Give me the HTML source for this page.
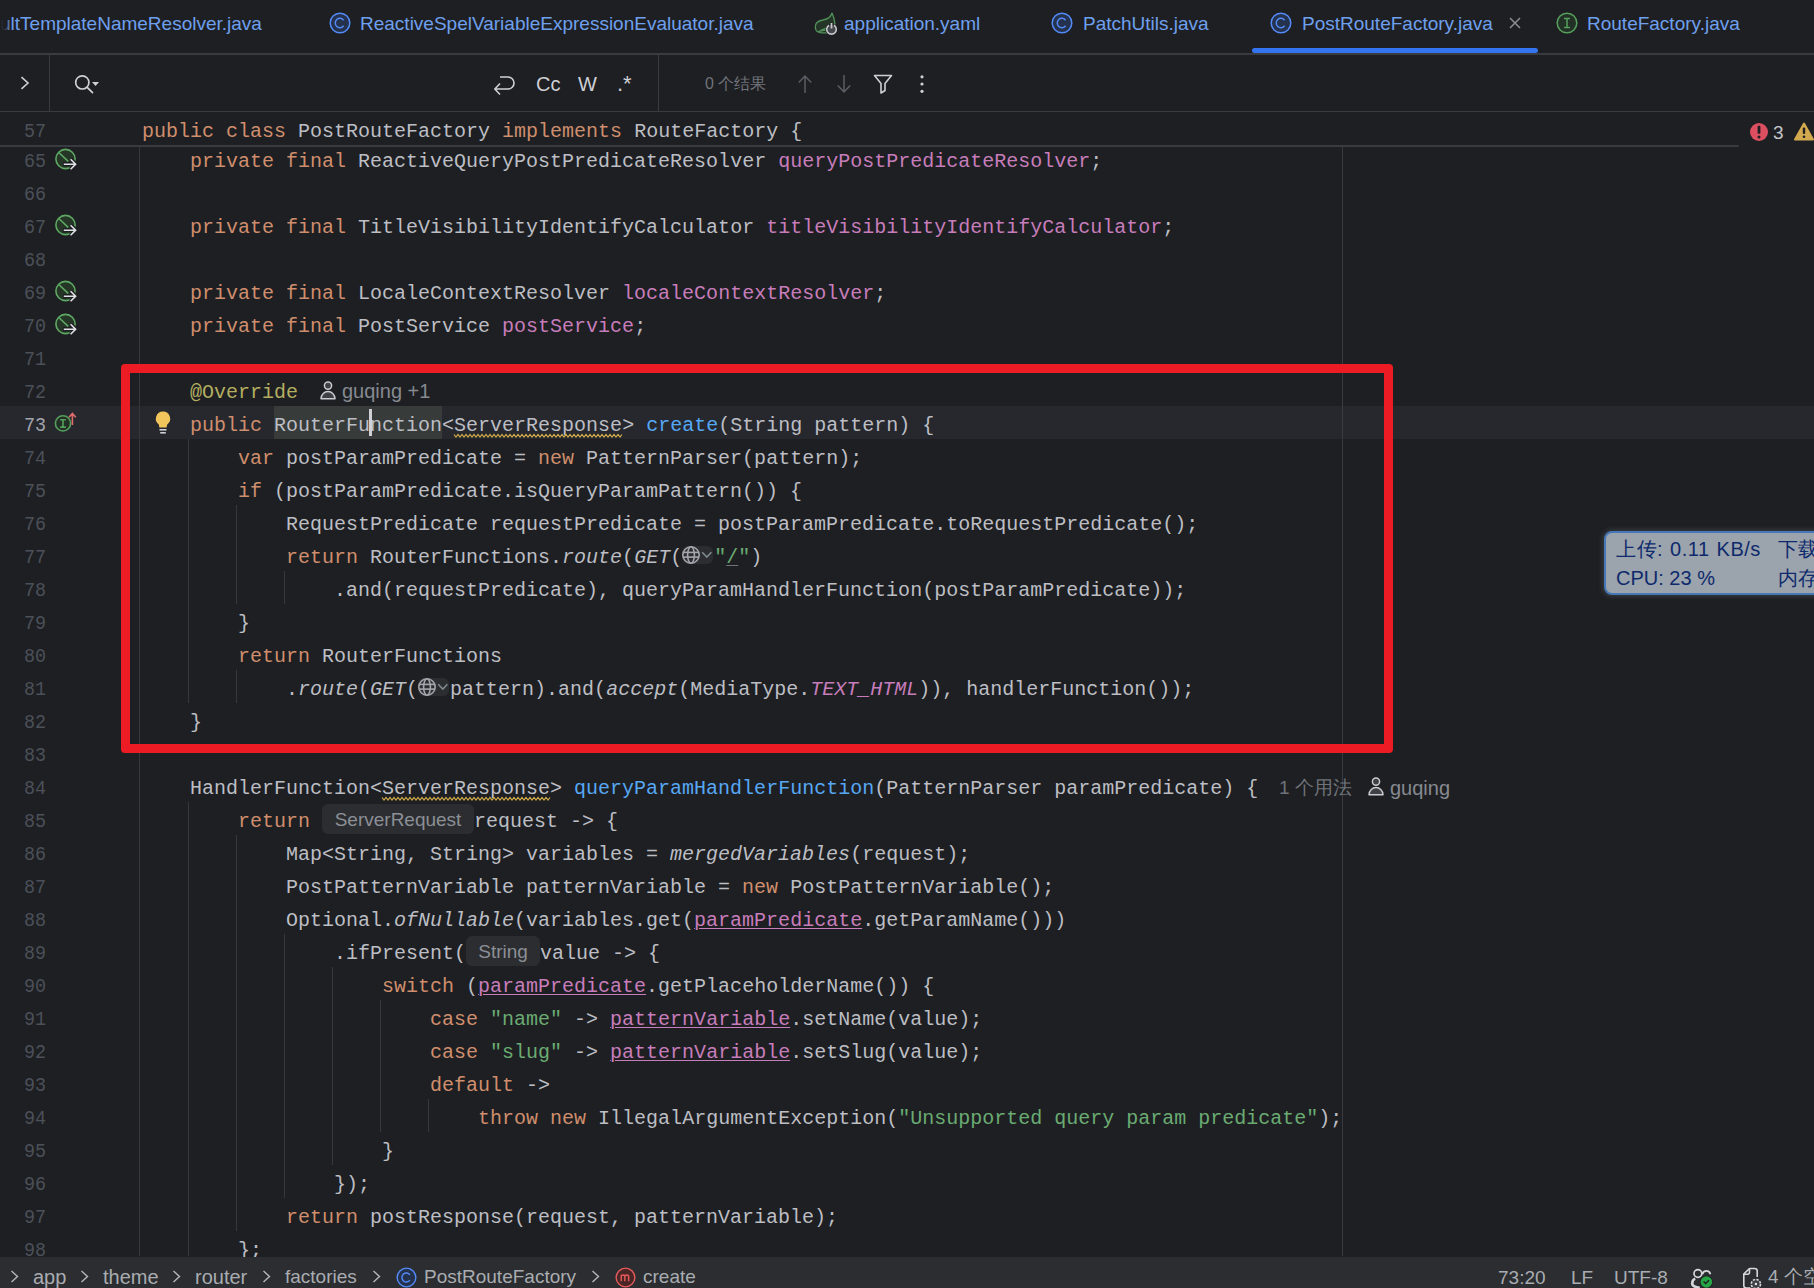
<!DOCTYPE html>
<html><head><meta charset="utf-8">
<style>
html,body{margin:0;padding:0;}
body{width:1814px;height:1288px;overflow:hidden;position:relative;background:#1E1F22;font-family:"Liberation Sans",sans-serif;}
.abs{position:absolute;}
svg{position:absolute;overflow:visible;}
/* tabs */
.tab{position:absolute;top:0px;height:47px;line-height:47px;font-size:19px;color:#6EA0EE;white-space:nowrap;}
.sep{position:absolute;background:#393B40;}
.ui{position:absolute;white-space:nowrap;font-size:19px;line-height:24px;}
/* editor */
.ln{position:absolute;left:0;width:46px;text-align:right;transform:scaleX(0.92);transform-origin:46px 0;height:33px;line-height:33px;padding-top:3px;font-family:"Liberation Mono",monospace;font-size:20px;color:#4B5059;}
.ln.cur{color:#A1A3AB;}
.cl{position:absolute;left:142px;height:33px;line-height:33px;padding-top:3px;font-family:"Liberation Mono",monospace;font-size:20px;color:#BCBEC4;white-space:pre;}
.k{color:#CF8E6D;}
.f{color:#C77DBB;}
.m{color:#56A8F5;}
.s{color:#6AAB73;}
.a{color:#B3AE60;}
.i{font-style:italic;}
.sf{color:#C77DBB;font-style:italic;}
.pu{color:#C77DBB;text-decoration:underline;text-decoration-color:#C77DBB;text-underline-offset:2px;text-decoration-thickness:1px;}
.u{text-decoration:underline;text-decoration-color:#6F737A;text-underline-offset:2px;text-decoration-thickness:1px;}
.w{}
.hl{}
.inlayg{display:inline-block;position:relative;width:32px;height:33px;vertical-align:top;}
.gbg{position:absolute;left:0;top:5px;width:31px;height:18px;border-radius:6px;background:#2B2D30;}
.inlayt,.inlayt2{display:inline-block;position:relative;top:-1px;font-family:"Liberation Sans",sans-serif;font-size:19px;color:#8C8F96;background:#2B2D30;border-radius:6px;height:30px;line-height:31px;vertical-align:top;text-align:center;}
.inlayt{width:152px;}
.inlayt2{width:74px;}
.guide{position:absolute;width:1px;background:#35373B;}
</style></head><body>

<!-- ============ TAB BAR ============ -->
<div class="tab" style="left:0px;">ultTemplateNameResolver.java</div>
<div class="abs" style="left:0;top:0;width:9px;height:50px;background:linear-gradient(90deg,#1E1F22 0%,rgba(30,31,34,0.85) 50%,rgba(30,31,34,0.3) 100%);"></div>
<svg style="left:329px;top:12px" width="22" height="22" viewBox="0 0 22 22"><circle cx="11" cy="11" r="9.8" fill="#25324D" stroke="#548AF7" stroke-width="1.5"/><path d="M14.6 8.2 A4.6 4.8 0 1 0 14.6 13.8" fill="none" stroke="#548AF7" stroke-width="1.5"/></svg>
<div class="tab" style="left:360px;">ReactiveSpelVariableExpressionEvaluator.java</div>
<svg style="left:814px;top:12px" width="24" height="24" viewBox="0 0 24 24"><path d="M18 1 C17 5 14 7 9 8 C3 9 1 12 1.3 15.5 C1.6 19 4 20.8 8 20.8 L14 20.8 L14 17.5 C10 18.5 6 19 5 19.5 C8 17 12 16.5 16 15 L21 12 C20.5 8 19.5 4 18 1 Z" fill="#243427" stroke="#52905A" stroke-width="1.3" stroke-linejoin="round"/><circle cx="17.5" cy="17.5" r="6" fill="#1E1F22"/><circle cx="17.5" cy="17.5" r="4.6" fill="#45474C"/><path d="M15 13.2 A4.8 4.8 0 1 0 20 13.2" fill="none" stroke="#C4C6CB" stroke-width="1.6"/><line x1="17.5" y1="11" x2="17.5" y2="16.5" stroke="#C4C6CB" stroke-width="1.8"/></svg>
<div class="tab" style="left:844px;">application.yaml</div>
<svg style="left:1051px;top:12px" width="22" height="22" viewBox="0 0 22 22"><circle cx="11" cy="11" r="9.8" fill="#25324D" stroke="#548AF7" stroke-width="1.5"/><path d="M14.6 8.2 A4.6 4.8 0 1 0 14.6 13.8" fill="none" stroke="#548AF7" stroke-width="1.5"/></svg>
<div class="tab" style="left:1083px;">PatchUtils.java</div>
<svg style="left:1270px;top:12px" width="22" height="22" viewBox="0 0 22 22"><circle cx="11" cy="11" r="9.8" fill="#25324D" stroke="#548AF7" stroke-width="1.5"/><path d="M14.6 8.2 A4.6 4.8 0 1 0 14.6 13.8" fill="none" stroke="#548AF7" stroke-width="1.5"/></svg>
<div class="tab" style="left:1302px;">PostRouteFactory.java</div>
<svg style="left:1509px;top:17px" width="12" height="12" viewBox="0 0 12 12"><path d="M1 1 L11 11 M11 1 L1 11" stroke="#8C8E93" stroke-width="1.5"/></svg>
<svg style="left:1556px;top:12px" width="22" height="22" viewBox="0 0 22 22"><circle cx="11" cy="11" r="9.8" fill="#233026" stroke="#55A05C" stroke-width="1.5"/><path d="M8 6.5 H14 M11 6.5 V15.5 M8 15.5 H14" stroke="#55A05C" stroke-width="1.5"/></svg>
<div class="tab" style="left:1587px;">RouteFactory.java</div>
<div class="sep" style="left:0;top:53px;width:1814px;height:2px;"></div>
<div class="abs" style="left:1252px;top:48px;width:286px;height:5px;border-radius:3px;background:#3574F0;"></div>

<!-- ============ SEARCH BAR ============ -->
<svg style="left:20px;top:76px" width="10" height="14" viewBox="0 0 10 14"><path d="M1.5 1.2 L8 7 L1.5 12.8" fill="none" stroke="#CED0D6" stroke-width="1.6"/></svg>
<div class="sep" style="left:49px;top:54px;width:1px;height:57px;"></div>
<svg style="left:72px;top:72px" width="30" height="24" viewBox="0 0 30 24"><circle cx="10.3" cy="10.4" r="6.6" fill="none" stroke="#CED0D6" stroke-width="1.7"/><line x1="15.2" y1="15.4" x2="20.5" y2="20.7" stroke="#CED0D6" stroke-width="1.7" stroke-linecap="round"/><path d="M20 10 L27 10 L23.5 14 Z" fill="#CED0D6"/></svg>
<svg style="left:492px;top:73px" width="24" height="24" viewBox="0 0 24 24"><path d="M8 4 H16 A6 6 0 0 1 16 16 H3.5 M8 10.5 L2.8 16 L8 21.5" fill="none" stroke="#CED0D6" stroke-width="1.6" stroke-linejoin="round"/></svg>
<div class="ui" style="left:536px;top:72px;font-size:20px;color:#CED0D6;">Cc</div>
<div class="ui" style="left:578px;top:72px;font-size:20px;color:#CED0D6;">W</div>
<div class="ui" style="left:617px;top:72px;font-size:22px;color:#CED0D6;">.*</div>
<div class="sep" style="left:658px;top:54px;width:1px;height:57px;"></div>
<div class="ui" style="left:705px;top:72px;font-size:16px;color:#6F737A;">0 个结果</div>
<svg style="left:797px;top:74px" width="16" height="20" viewBox="0 0 16 20"><path d="M8 2 V19 M1.8 8.5 L8 2 L14.2 8.5" fill="none" stroke="#5B5E64" stroke-width="1.5"/></svg>
<svg style="left:836px;top:74px" width="16" height="20" viewBox="0 0 16 20"><path d="M8 1 V18 M1.8 11.5 L8 18 L14.2 11.5" fill="none" stroke="#5B5E64" stroke-width="1.5"/></svg>
<svg style="left:873px;top:74px" width="20" height="21" viewBox="0 0 20 21"><path d="M1.5 1.5 H18.5 L12 9.5 V16.5 L8 19 V9.5 Z" fill="none" stroke="#CED0D6" stroke-width="1.6" stroke-linejoin="round"/></svg>
<svg style="left:918px;top:74px" width="8" height="20" viewBox="0 0 8 20"><circle cx="4" cy="2.8" r="1.6" fill="#CED0D6"/><circle cx="4" cy="10" r="1.6" fill="#CED0D6"/><circle cx="4" cy="17.3" r="1.6" fill="#CED0D6"/></svg>
<div class="sep" style="left:0;top:111px;width:1814px;height:1px;"></div>

<!-- ============ EDITOR ============ -->
<div class="abs" style="left:0;top:406px;width:1814px;height:33px;background:#26282E;"></div>
<div class="abs" style="left:274px;top:406px;width:168px;height:33px;background:#373B39;"></div>
<div class="guide" style="left:139px;top:147px;height:1109px;"></div>
<div class="guide" style="left:1342px;top:147px;height:1109px;background:#393B40;"></div>
<div class="guide" style="left:188px;top:439px;height:264px"></div>
<div class="guide" style="left:236px;top:505px;height:99px"></div>
<div class="guide" style="left:284px;top:571px;height:33px"></div>
<div class="guide" style="left:236px;top:670px;height:33px"></div>
<div class="guide" style="left:188px;top:802px;height:454px"></div>
<div class="guide" style="left:236px;top:835px;height:396px"></div>
<div class="guide" style="left:284px;top:934px;height:264px"></div>
<div class="guide" style="left:332px;top:967px;height:198px"></div>
<div class="guide" style="left:380px;top:1000px;height:132px"></div>
<div class="guide" style="left:428px;top:1099px;height:33px"></div>
<div class="ln" style="top:142px">65</div>
<div class="ln" style="top:175px">66</div>
<div class="ln" style="top:208px">67</div>
<div class="ln" style="top:241px">68</div>
<div class="ln" style="top:274px">69</div>
<div class="ln" style="top:307px">70</div>
<div class="ln" style="top:340px">71</div>
<div class="ln" style="top:373px">72</div>
<div class="ln cur" style="top:406px">73</div>
<div class="ln" style="top:439px">74</div>
<div class="ln" style="top:472px">75</div>
<div class="ln" style="top:505px">76</div>
<div class="ln" style="top:538px">77</div>
<div class="ln" style="top:571px">78</div>
<div class="ln" style="top:604px">79</div>
<div class="ln" style="top:637px">80</div>
<div class="ln" style="top:670px">81</div>
<div class="ln" style="top:703px">82</div>
<div class="ln" style="top:736px">83</div>
<div class="ln" style="top:769px">84</div>
<div class="ln" style="top:802px">85</div>
<div class="ln" style="top:835px">86</div>
<div class="ln" style="top:868px">87</div>
<div class="ln" style="top:901px">88</div>
<div class="ln" style="top:934px">89</div>
<div class="ln" style="top:967px">90</div>
<div class="ln" style="top:1000px">91</div>
<div class="ln" style="top:1033px">92</div>
<div class="ln" style="top:1066px">93</div>
<div class="ln" style="top:1099px">94</div>
<div class="ln" style="top:1132px">95</div>
<div class="ln" style="top:1165px">96</div>
<div class="ln" style="top:1198px">97</div>
<div class="ln" style="top:1231px">98</div>
<div class="cl" style="top:142px">    <span class="k">private</span> <span class="k">final</span> ReactiveQueryPostPredicateResolver <span class="f">queryPostPredicateResolver</span>;</div>
<div class="cl" style="top:175px"></div>
<div class="cl" style="top:208px">    <span class="k">private</span> <span class="k">final</span> TitleVisibilityIdentifyCalculator <span class="f">titleVisibilityIdentifyCalculator</span>;</div>
<div class="cl" style="top:241px"></div>
<div class="cl" style="top:274px">    <span class="k">private</span> <span class="k">final</span> LocaleContextResolver <span class="f">localeContextResolver</span>;</div>
<div class="cl" style="top:307px">    <span class="k">private</span> <span class="k">final</span> PostService <span class="f">postService</span>;</div>
<div class="cl" style="top:340px"></div>
<div class="cl" style="top:373px">    <span class="a">@Override</span></div>
<div class="cl" style="top:406px">    <span class="k">public</span> <span class="hl">RouterFunction</span>&lt;<span class="w">ServerResponse</span>&gt; <span class="m">create</span>(String pattern) {</div>
<div class="cl" style="top:439px">        <span class="k">var</span> postParamPredicate = <span class="k">new</span> PatternParser(pattern);</div>
<div class="cl" style="top:472px">        <span class="k">if</span> (postParamPredicate.isQueryParamPattern()) {</div>
<div class="cl" style="top:505px">            RequestPredicate requestPredicate = postParamPredicate.toRequestPredicate();</div>
<div class="cl" style="top:538px">            <span class="k">return</span> RouterFunctions.<span class="i">route</span>(<span class="i">GET</span>(<span class="inlayg"><span class="gbg"></span><svg style="left:0px;top:4px" width="20" height="20" viewBox="0 0 20 20"><g fill="none" stroke="#A3A6AD" stroke-width="1.6"><circle cx="9" cy="10" r="8.2"/><ellipse cx="9" cy="10" rx="3.4" ry="8.2"/><line x1="1" y1="7.4" x2="17" y2="7.4"/><line x1="1" y1="12.1" x2="17" y2="12.1"/></g></svg><svg style="left:19px;top:10px" width="12" height="8" viewBox="0 0 12 8"><path d="M1.2 1.2 L5.8 6 L10.4 1.2" fill="none" stroke="#7E898E" stroke-width="1.6"/></svg></span><span class="s">"</span><span class="s u">/</span><span class="s">"</span>)</div>
<div class="cl" style="top:571px">                .and(requestPredicate), queryParamHandlerFunction(postParamPredicate));</div>
<div class="cl" style="top:604px">        }</div>
<div class="cl" style="top:637px">        <span class="k">return</span> RouterFunctions</div>
<div class="cl" style="top:670px">            .<span class="i">route</span>(<span class="i">GET</span>(<span class="inlayg"><span class="gbg"></span><svg style="left:0px;top:4px" width="20" height="20" viewBox="0 0 20 20"><g fill="none" stroke="#A3A6AD" stroke-width="1.6"><circle cx="9" cy="10" r="8.2"/><ellipse cx="9" cy="10" rx="3.4" ry="8.2"/><line x1="1" y1="7.4" x2="17" y2="7.4"/><line x1="1" y1="12.1" x2="17" y2="12.1"/></g></svg><svg style="left:19px;top:10px" width="12" height="8" viewBox="0 0 12 8"><path d="M1.2 1.2 L5.8 6 L10.4 1.2" fill="none" stroke="#7E898E" stroke-width="1.6"/></svg></span>pattern).and(<span class="i">accept</span>(MediaType.<span class="sf">TEXT_HTML</span>)), handlerFunction());</div>
<div class="cl" style="top:703px">    }</div>
<div class="cl" style="top:736px"></div>
<div class="cl" style="top:769px">    HandlerFunction&lt;<span class="w">ServerResponse</span>&gt; <span class="m">queryParamHandlerFunction</span>(PatternParser paramPredicate) {</div>
<div class="cl" style="top:802px">        <span class="k">return</span> <span class="inlayt">ServerRequest</span>request -&gt; {</div>
<div class="cl" style="top:835px">            Map&lt;String, String&gt; variables = <span class="i">mergedVariables</span>(request);</div>
<div class="cl" style="top:868px">            PostPatternVariable patternVariable = <span class="k">new</span> PostPatternVariable();</div>
<div class="cl" style="top:901px">            Optional.<span class="i">ofNullable</span>(variables.get(<span class="pu">paramPredicate</span>.getParamName()))</div>
<div class="cl" style="top:934px">                .ifPresent(<span class="inlayt2">String</span>value -&gt; {</div>
<div class="cl" style="top:967px">                    <span class="k">switch</span> (<span class="pu">paramPredicate</span>.getPlaceholderName()) {</div>
<div class="cl" style="top:1000px">                        <span class="k">case</span> <span class="s">"name"</span> -&gt; <span class="pu">patternVariable</span>.setName(value);</div>
<div class="cl" style="top:1033px">                        <span class="k">case</span> <span class="s">"slug"</span> -&gt; <span class="pu">patternVariable</span>.setSlug(value);</div>
<div class="cl" style="top:1066px">                        <span class="k">default</span> -&gt;</div>
<div class="cl" style="top:1099px">                            <span class="k">throw</span> <span class="k">new</span> IllegalArgumentException(<span class="s">"Unsupported query param predicate"</span>);</div>
<div class="cl" style="top:1132px">                    }</div>
<div class="cl" style="top:1165px">                });</div>
<div class="cl" style="top:1198px">            <span class="k">return</span> postResponse(request, patternVariable);</div>
<div class="cl" style="top:1231px">        };</div>

<!-- wavy -->
<svg style="left:454px;top:434px" width="168" height="4" viewBox="0 0 168 4"><polyline points="0.0,0.5 2.0,3.0 4.0,0.5 6.0,3.0 8.0,0.5 10.0,3.0 12.0,0.5 14.0,3.0 16.0,0.5 18.0,3.0 20.0,0.5 22.0,3.0 24.0,0.5 26.0,3.0 28.0,0.5 30.0,3.0 32.0,0.5 34.0,3.0 36.0,0.5 38.0,3.0 40.0,0.5 42.0,3.0 44.0,0.5 46.0,3.0 48.0,0.5 50.0,3.0 52.0,0.5 54.0,3.0 56.0,0.5 58.0,3.0 60.0,0.5 62.0,3.0 64.0,0.5 66.0,3.0 68.0,0.5 70.0,3.0 72.0,0.5 74.0,3.0 76.0,0.5 78.0,3.0 80.0,0.5 82.0,3.0 84.0,0.5 86.0,3.0 88.0,0.5 90.0,3.0 92.0,0.5 94.0,3.0 96.0,0.5 98.0,3.0 100.0,0.5 102.0,3.0 104.0,0.5 106.0,3.0 108.0,0.5 110.0,3.0 112.0,0.5 114.0,3.0 116.0,0.5 118.0,3.0 120.0,0.5 122.0,3.0 124.0,0.5 126.0,3.0 128.0,0.5 130.0,3.0 132.0,0.5 134.0,3.0 136.0,0.5 138.0,3.0 140.0,0.5 142.0,3.0 144.0,0.5 146.0,3.0 148.0,0.5 150.0,3.0 152.0,0.5 154.0,3.0 156.0,0.5 158.0,3.0 160.0,0.5 162.0,3.0 164.0,0.5 166.0,3.0 168.0,0.5" fill="none" stroke="#D6AE4A" stroke-width="1.2"/></svg>
<svg style="left:382px;top:797px" width="168" height="4" viewBox="0 0 168 4"><polyline points="0.0,0.5 2.0,3.0 4.0,0.5 6.0,3.0 8.0,0.5 10.0,3.0 12.0,0.5 14.0,3.0 16.0,0.5 18.0,3.0 20.0,0.5 22.0,3.0 24.0,0.5 26.0,3.0 28.0,0.5 30.0,3.0 32.0,0.5 34.0,3.0 36.0,0.5 38.0,3.0 40.0,0.5 42.0,3.0 44.0,0.5 46.0,3.0 48.0,0.5 50.0,3.0 52.0,0.5 54.0,3.0 56.0,0.5 58.0,3.0 60.0,0.5 62.0,3.0 64.0,0.5 66.0,3.0 68.0,0.5 70.0,3.0 72.0,0.5 74.0,3.0 76.0,0.5 78.0,3.0 80.0,0.5 82.0,3.0 84.0,0.5 86.0,3.0 88.0,0.5 90.0,3.0 92.0,0.5 94.0,3.0 96.0,0.5 98.0,3.0 100.0,0.5 102.0,3.0 104.0,0.5 106.0,3.0 108.0,0.5 110.0,3.0 112.0,0.5 114.0,3.0 116.0,0.5 118.0,3.0 120.0,0.5 122.0,3.0 124.0,0.5 126.0,3.0 128.0,0.5 130.0,3.0 132.0,0.5 134.0,3.0 136.0,0.5 138.0,3.0 140.0,0.5 142.0,3.0 144.0,0.5 146.0,3.0 148.0,0.5 150.0,3.0 152.0,0.5 154.0,3.0 156.0,0.5 158.0,3.0 160.0,0.5 162.0,3.0 164.0,0.5 166.0,3.0 168.0,0.5" fill="none" stroke="#D6AE4A" stroke-width="1.2"/></svg>
<!-- gutter icons -->
<svg style="left:54px;top:148px" width="24" height="24" viewBox="0 0 24 24"><circle cx="11.5" cy="11" r="9.6" fill="#253627" stroke="#5EA863" stroke-width="1.6"/><line x1="4.8" y1="4.5" x2="14.2" y2="13.4" stroke="#5EA863" stroke-width="1.6"/><path d="M9 16.2 H21.8 M16.6 11.2 L21.8 16.2 L16.6 21.2" fill="none" stroke="#1E1F22" stroke-width="4.2"/><path d="M9.8 16.2 H21.6 M16.6 11.2 L21.6 16.2 L16.6 21.2" fill="none" stroke="#DFE1E5" stroke-width="1.6"/></svg>
<svg style="left:54px;top:214px" width="24" height="24" viewBox="0 0 24 24"><circle cx="11.5" cy="11" r="9.6" fill="#253627" stroke="#5EA863" stroke-width="1.6"/><line x1="4.8" y1="4.5" x2="14.2" y2="13.4" stroke="#5EA863" stroke-width="1.6"/><path d="M9 16.2 H21.8 M16.6 11.2 L21.8 16.2 L16.6 21.2" fill="none" stroke="#1E1F22" stroke-width="4.2"/><path d="M9.8 16.2 H21.6 M16.6 11.2 L21.6 16.2 L16.6 21.2" fill="none" stroke="#DFE1E5" stroke-width="1.6"/></svg>
<svg style="left:54px;top:280px" width="24" height="24" viewBox="0 0 24 24"><circle cx="11.5" cy="11" r="9.6" fill="#253627" stroke="#5EA863" stroke-width="1.6"/><line x1="4.8" y1="4.5" x2="14.2" y2="13.4" stroke="#5EA863" stroke-width="1.6"/><path d="M9 16.2 H21.8 M16.6 11.2 L21.8 16.2 L16.6 21.2" fill="none" stroke="#1E1F22" stroke-width="4.2"/><path d="M9.8 16.2 H21.6 M16.6 11.2 L21.6 16.2 L16.6 21.2" fill="none" stroke="#DFE1E5" stroke-width="1.6"/></svg>
<svg style="left:54px;top:313px" width="24" height="24" viewBox="0 0 24 24"><circle cx="11.5" cy="11" r="9.6" fill="#253627" stroke="#5EA863" stroke-width="1.6"/><line x1="4.8" y1="4.5" x2="14.2" y2="13.4" stroke="#5EA863" stroke-width="1.6"/><path d="M9 16.2 H21.8 M16.6 11.2 L21.8 16.2 L16.6 21.2" fill="none" stroke="#1E1F22" stroke-width="4.2"/><path d="M9.8 16.2 H21.6 M16.6 11.2 L21.6 16.2 L16.6 21.2" fill="none" stroke="#DFE1E5" stroke-width="1.6"/></svg>
<svg style="left:54px;top:411px" width="24" height="22" viewBox="0 0 24 22"><circle cx="9" cy="12.4" r="7.6" fill="#233026" stroke="#55A05C" stroke-width="1.6"/><path d="M6.2 8.7 H11.8 M9 8.7 V16.1 M6.2 16.1 H11.8" stroke="#55A05C" stroke-width="1.6"/><path d="M18.4 14 V2.5 M15 6.2 L18.4 2.5 L21.8 6.2" fill="none" stroke="#E06C6C" stroke-width="1.6"/></svg>
<!-- lightbulb -->
<svg style="left:154px;top:410px" width="18" height="26" viewBox="0 0 18 26"><path d="M9 1.5 A7.2 7.2 0 0 1 13.2 14.5 L12.6 17.5 H5.4 L4.8 14.5 A7.2 7.2 0 0 1 9 1.5 Z" fill="#F2C55C"/><rect x="5.5" y="19" width="7" height="1.6" fill="#CED0D6"/><rect x="6.2" y="22" width="5.6" height="1.6" fill="#CED0D6"/></svg>
<!-- caret -->
<div class="abs" style="left:369px;top:409px;width:3px;height:27px;background:#CED0D6;"></div>
<!-- inlay author line 72 -->
<svg style="left:320px;top:381px" width="17" height="19" viewBox="0 0 17 19"><circle cx="8" cy="4.6" r="3.6" fill="#3E4046" stroke="#C9CBD0" stroke-width="1.5"/><path d="M1 17.8 A7 7.2 0 0 1 15 17.8 Z" fill="#3E4046" stroke="#C9CBD0" stroke-width="1.5" stroke-linejoin="round"/></svg>
<div class="ui" style="left:342px;top:379px;font-size:20px;color:#868A91;">guqing +1</div>
<!-- inlay line 84 -->
<div class="ui" style="left:1279px;top:776px;font-size:19px;color:#6F737A;">1 个用法</div>
<svg style="left:1368px;top:777px" width="17" height="19" viewBox="0 0 17 19"><circle cx="8" cy="4.6" r="3.6" fill="#3E4046" stroke="#C9CBD0" stroke-width="1.5"/><path d="M1 17.8 A7 7.2 0 0 1 15 17.8 Z" fill="#3E4046" stroke="#C9CBD0" stroke-width="1.5" stroke-linejoin="round"/></svg>
<div class="ui" style="left:1390px;top:776px;font-size:20px;color:#868A91;">guqing</div>

<!-- ============ STICKY ============ -->
<div class="abs" style="left:0;top:112px;width:1740px;height:33px;background:#1E1F22;"></div>
<div class="ln" style="top:112px;">57</div>
<div class="cl" style="top:112px;"><span class="k">public</span> <span class="k">class</span> PostRouteFactory <span class="k">implements</span> RouteFactory {</div>
<div class="sep" style="left:0;top:145px;width:1739px;height:2px;border-radius:0 1px 1px 0;"></div>
<!-- error widget -->
<svg style="left:1749px;top:122px" width="20" height="20" viewBox="0 0 20 20"><circle cx="10" cy="10" r="9" fill="#DB4F61"/><rect x="8.6" y="3.8" width="2.8" height="8" rx="1" fill="#1E1F22"/><circle cx="10" cy="15" r="1.5" fill="#1E1F22"/></svg>
<div class="ui" style="left:1773px;top:121px;font-size:19px;color:#C4C6CB;">3</div>
<svg style="left:1794px;top:122px" width="20" height="19" viewBox="0 0 20 19"><path d="M10 1.5 L19 17.5 H1 Z" fill="#D3A94F" stroke="#D3A94F" stroke-width="2" stroke-linejoin="round"/><rect x="8.8" y="5.5" width="2.4" height="6.5" rx="1" fill="#1E1F22"/><circle cx="10" cy="14.8" r="1.3" fill="#1E1F22"/></svg>

<!-- ============ MONITOR WIDGET ============ -->
<div class="abs" style="left:1604px;top:531px;width:230px;height:60px;border:2px solid #4677B6;border-radius:8px;background:#9BA3AC;box-shadow:0 0 4px 2px rgba(70,74,80,0.55);"></div>
<div class="ui" style="left:1616px;top:537px;font-size:20px;color:#0E2A6C;letter-spacing:0.5px;word-spacing:1px;">上传: 0.11 KB/s</div>
<div class="ui" style="left:1778px;top:537px;font-size:20px;color:#0E2A6C;">下载</div>
<div class="ui" style="left:1616px;top:566px;font-size:20px;color:#0E2A6C;">CPU: 23 %</div>
<div class="ui" style="left:1778px;top:566px;font-size:20px;color:#0E2A6C;">内存</div>

<!-- ============ STATUS BAR ============ -->
<div class="abs" style="left:0;top:1257px;width:1814px;height:31px;background:#2B2D30;"></div>
<svg style="left:10px;top:1270px" width="10" height="14" viewBox="0 0 10 14"><path d="M1.5 1 L7.5 6.5 L1.5 12" fill="none" stroke="#B4B7BC" stroke-width="1.4"/></svg>
<div class="ui" style="left:33px;top:1265px;font-size:20px;color:#A9ACB1;">app</div>
<svg style="left:80px;top:1270px" width="10" height="14" viewBox="0 0 10 14"><path d="M1.5 1 L7.5 6.5 L1.5 12" fill="none" stroke="#B4B7BC" stroke-width="1.4"/></svg>
<div class="ui" style="left:103px;top:1265px;font-size:20px;color:#A9ACB1;">theme</div>
<svg style="left:172px;top:1270px" width="10" height="14" viewBox="0 0 10 14"><path d="M1.5 1 L7.5 6.5 L1.5 12" fill="none" stroke="#B4B7BC" stroke-width="1.4"/></svg>
<div class="ui" style="left:195px;top:1265px;font-size:20px;color:#A9ACB1;">router</div>
<svg style="left:262px;top:1270px" width="10" height="14" viewBox="0 0 10 14"><path d="M1.5 1 L7.5 6.5 L1.5 12" fill="none" stroke="#B4B7BC" stroke-width="1.4"/></svg>
<div class="ui" style="left:285px;top:1265px;font-size:19px;color:#A9ACB1;">factories</div>
<svg style="left:372px;top:1270px" width="10" height="14" viewBox="0 0 10 14"><path d="M1.5 1 L7.5 6.5 L1.5 12" fill="none" stroke="#B4B7BC" stroke-width="1.4"/></svg>
<svg style="left:396px;top:1267px" width="21" height="21" viewBox="0 0 22 22"><circle cx="11" cy="11" r="9.8" fill="#25324D" stroke="#548AF7" stroke-width="1.5"/><path d="M14.6 8.2 A4.6 4.8 0 1 0 14.6 13.8" fill="none" stroke="#548AF7" stroke-width="1.5"/></svg>
<div class="ui" style="left:424px;top:1265px;font-size:19px;color:#A9ACB1;">PostRouteFactory</div>
<svg style="left:591px;top:1270px" width="10" height="14" viewBox="0 0 10 14"><path d="M1.5 1 L7.5 6.5 L1.5 12" fill="none" stroke="#B4B7BC" stroke-width="1.4"/></svg>
<svg style="left:615px;top:1267px" width="21" height="21" viewBox="0 0 22 22"><circle cx="11" cy="11" r="9.8" fill="#4A2526" stroke="#E55B5B" stroke-width="1.5"/><path d="M6.5 15 V8.5 M6.5 10 Q6.5 8.3 8.3 8.3 Q10.3 8.3 10.3 10 V15 M10.3 10 Q10.3 8.3 12.3 8.3 Q14.3 8.3 14.3 10 V15" fill="none" stroke="#E55B5B" stroke-width="1.5"/></svg>
<div class="ui" style="left:643px;top:1265px;font-size:19px;color:#A9ACB1;">create</div>
<div class="ui" style="left:1498px;top:1266px;font-size:19px;color:#A9ACB1;">73:20</div>
<div class="ui" style="left:1571px;top:1266px;font-size:19px;color:#A9ACB1;">LF</div>
<div class="ui" style="left:1614px;top:1266px;font-size:19px;color:#A9ACB1;">UTF-8</div>
<svg style="left:1690px;top:1268px" width="26" height="22" viewBox="0 0 26 22"><circle cx="7.9" cy="5.5" r="3.9" fill="none" stroke="#D5D7DC" stroke-width="1.7"/><path d="M12.4 6.2 A4.1 4.2 0 0 1 20.4 6.2" fill="none" stroke="#D5D7DC" stroke-width="1.7"/><path d="M5.2 10.6 Q2.2 11.8 2.2 15.5 Q2.2 18.8 9.8 19.8" fill="none" stroke="#D5D7DC" stroke-width="2.6"/><circle cx="16.4" cy="14" r="6.6" fill="#1E1F22"/><circle cx="16.4" cy="14" r="5.8" fill="#27A545"/><path d="M13.6 13.6 L15.6 15.5 L19 12.2" fill="none" stroke="#1E1F22" stroke-width="1.4"/></svg>
<svg style="left:1742px;top:1267px" width="24" height="22" viewBox="0 0 24 22"><path d="M7.5 1.5 H12.6 Q15.2 1.5 15.2 4 V10 M8.5 21 H4.2 Q1.8 21 1.8 18.5 V7 L7.5 1.5" fill="none" stroke="#D5D7DC" stroke-width="1.6" stroke-linejoin="round"/><path d="M1.8 7.2 H5.5 Q7.5 7.2 7.5 5.2 V1.5" fill="none" stroke="#D5D7DC" stroke-width="1.5"/><circle cx="13.9" cy="17" r="4.6" fill="#3C3F44"/><circle cx="13.9" cy="17" r="4.6" fill="none" stroke="#D5D7DC" stroke-width="1.6" stroke-dasharray="2.4 1.2"/><rect x="12.8" y="15.9" width="2.2" height="2.2" fill="#E0E2E6"/></svg>
<div class="ui" style="left:1768px;top:1265px;font-size:19px;color:#A9ACB1;">4 个空格</div>

<!-- red box -->
<div class="abs" style="left:121px;top:364px;width:1254px;height:371px;border:9px solid #ED1C24;border-radius:4px;"></div>
</body></html>
